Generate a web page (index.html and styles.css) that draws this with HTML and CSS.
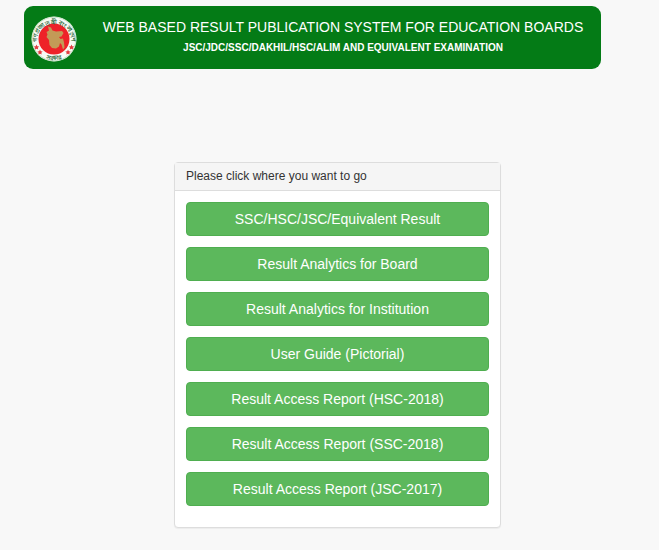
FILE: index.html
```
<!DOCTYPE html>
<html lang="en">
<head>
<meta charset="utf-8">
<meta name="viewport" content="width=device-width, initial-scale=1">
<title>Web Based Result Publication System for Education Boards</title>
<link rel="stylesheet" href="styles.css">
</head>
<body>
<header class="banner">
  <svg class="seal" viewBox="0 0 46 46" aria-hidden="true">
    <defs>
      <path id="arc-top" d="M6 28A17.200 17.200 0 1 1 40 28"/>
      <path id="arc-bottom" d="M10 39.500A20.800 20.800 0 0 0 36 39.500"/>
    </defs>
    <circle cx="23" cy="23" r="22.500" fill="#f8fbf5"/>
    <circle cx="23" cy="23" r="21.800" fill="none" stroke="#a9cfab" stroke-width=".6"/>
    <circle cx="23" cy="23" r="15.500" fill="#ee2228"/>
    <path fill="#c39a57" d="M17 10.500l3 1 1.500 3 3.500 1 6-.5 1.500 2-2 3.500-2.500.5 1.500 2 2.500-.5 1 4 .5 5-1.500 2-1.500-5-1.500-1.500-1 3.500-3 2-4-.5-2.500-3-.5-5-2.500-3 1-2.500-1-2.500 2.500-1.500z"/>
    <g fill="#e23b3e">
      <path id="star" d="M5.500 28.500l.8 1.700 1.900.2-1.400 1.300.4 1.900-1.700-.9-1.700.9.400-1.900-1.400-1.300 1.900-.2z"/>
      <use href="#star" x="3.500" y="5"/>
      <use href="#star" x="35"/>
      <use href="#star" x="31.500" y="5"/>
    </g>
    <g class="seal-text">
      <text><textPath href="#arc-top" startOffset="50%" text-anchor="middle">গণপ্রজাতন্ত্রী বাংলাদেশ</textPath></text>
      <text><textPath href="#arc-bottom" startOffset="50%" text-anchor="middle">সরকার</textPath></text>
    </g>
  </svg>
  <div class="banner-text">
    <h1>WEB BASED RESULT PUBLICATION SYSTEM FOR EDUCATION BOARDS</h1>
    <p>JSC/JDC/SSC/DAKHIL/HSC/ALIM AND EQUIVALENT EXAMINATION</p>
  </div>
</header>
<main class="content">
  <section class="panel">
    <h2 class="panel-heading">Please click where you want to go</h2>
    <nav class="panel-body">
      <a class="btn" href="#result">SSC/HSC/JSC/Equivalent Result</a>
      <a class="btn" href="#board">Result Analytics for Board</a>
      <a class="btn" href="#institution">Result Analytics for Institution</a>
      <a class="btn" href="#guide">User Guide (Pictorial)</a>
      <a class="btn" href="#hsc-2018">Result Access Report (HSC-2018)</a>
      <a class="btn" href="#ssc-2018">Result Access Report (SSC-2018)</a>
      <a class="btn" href="#jsc-2017">Result Access Report (JSC-2017)</a>
    </nav>
  </section>
</main>
</body>
</html>
```
FILE: styles.css
```
* {
  box-sizing: border-box;
}

body {
  margin: 0;
  padding: 6px 58px 20px 24px;
  background: #f8f8f8;
  color: #333;
  font-family: "Liberation Sans", Arial, sans-serif;
}

.banner {
  display: flex;
  align-items: flex-start;
  gap: 8px;
  padding: 10px 0 7px 7px;
  border-radius: 9px;
  background: #047b16;
  color: #fff;
}

.seal {
  flex: none;
  width: 46px;
  height: 46px;
}

.seal-text {
  fill: #2f6b3d;
  font-size: 6px;
  font-weight: bold;
}

.banner-text {
  flex: 1;
  text-align: center;
}

.banner h1 {
  margin: 0;
  font-size: 14px;
  font-weight: normal;
  line-height: 22px;
}

.banner p {
  margin: 0;
  font-size: 10px;
  font-weight: bold;
  line-height: 20px;
}

.content {
  padding: 93px 0 0 50px;
}

.panel {
  max-width: 327px;
  margin: 0 auto;
  border: 1px solid #ddd;
  border-radius: 4px;
  background: #fff;
  box-shadow: 0 1px 1px rgba(0, 0, 0, 0.05);
}

.panel-heading {
  margin: 0;
  padding: 3px 11px 4px;
  border-bottom: 1px solid #ddd;
  background: #f5f5f5;
  font-size: 12px;
  font-weight: normal;
  line-height: 20px;
}

.panel-body {
  display: grid;
  gap: 11px;
  padding: 11px 11px 21px;
}

.btn {
  display: block;
  border: 1px solid #4fae50;
  border-radius: 4px;
  background: #5cb85c;
  color: #fff;
  font-size: 14px;
  line-height: 32px;
  text-align: center;
  text-decoration: none;
}
```
